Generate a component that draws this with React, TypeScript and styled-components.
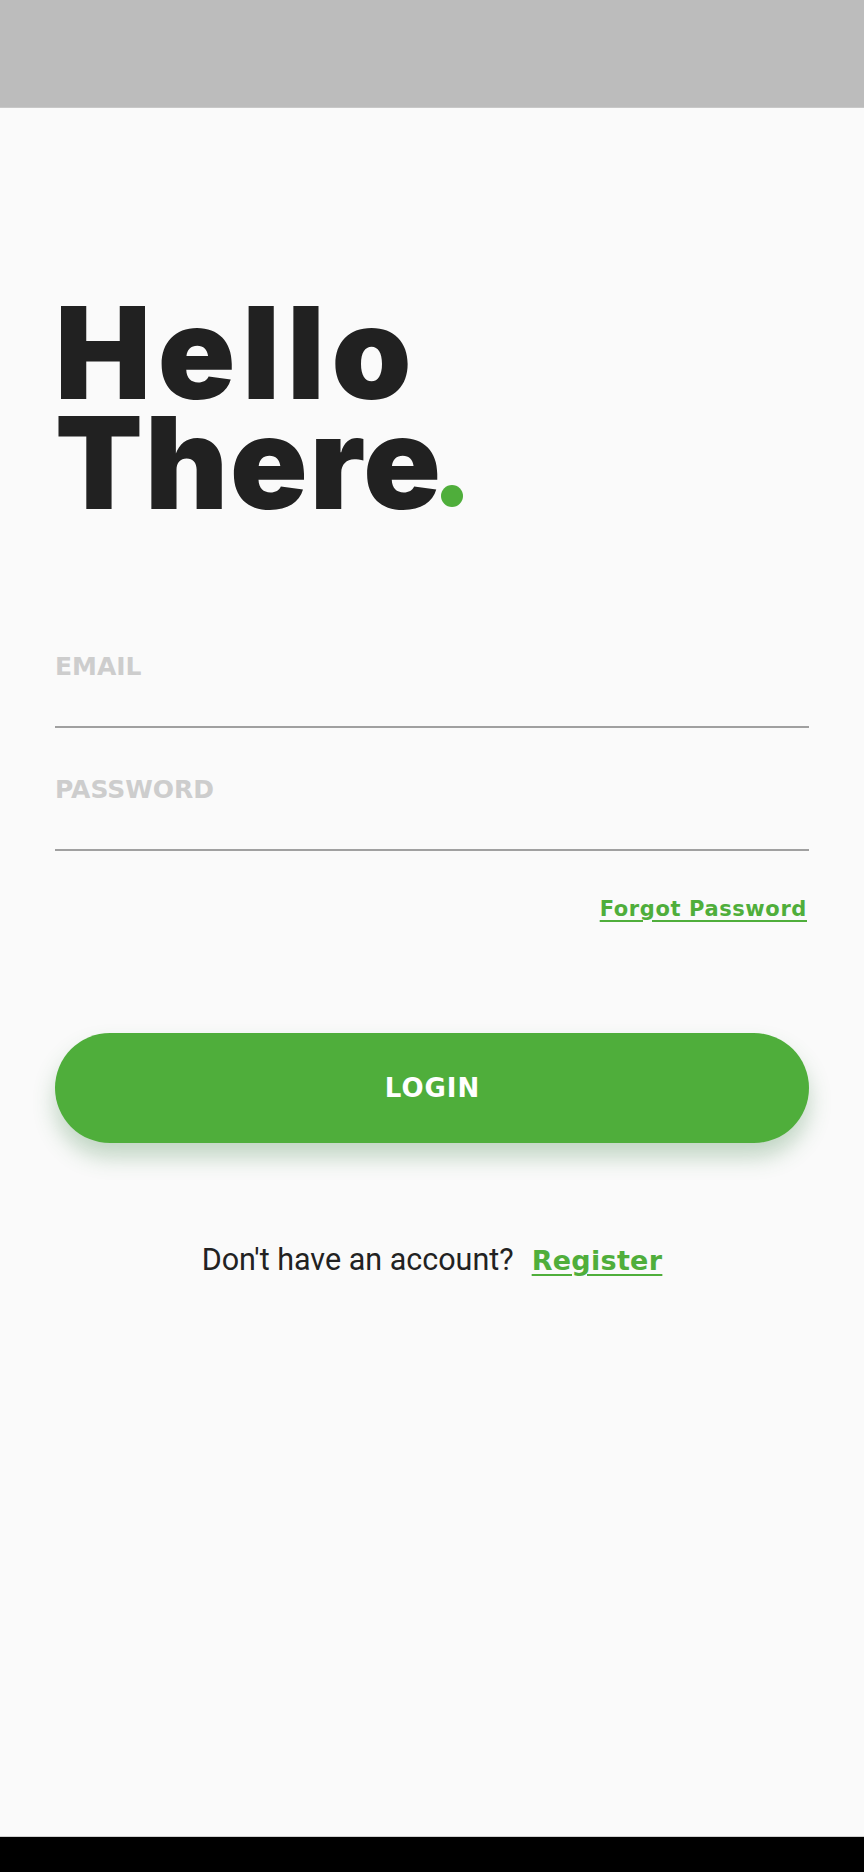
import React from "react";
import styled, { createGlobalStyle } from "styled-components";

const GREEN = "#4fae3b";
const HEAVY = "Inter, 'Open Sans', sans-serif";
const WIDE = "'DejaVu Sans', Verdana, sans-serif";

const Global = createGlobalStyle`
  html, body { margin: 0; padding: 0; background: #fafafa; }
  * { box-sizing: border-box; }
`;

const Screen = styled.div`
  width: 864px;
  height: 1872px;
  display: flex;
  flex-direction: column;
  background: #fafafa;
  overflow: hidden;
`;

const StatusBar = styled.div`
  height: 108px;
  flex: none;
  background: #bcbcbc;
  border-bottom: 1px solid #c8c8c8;
`;

const Content = styled.main`
  flex: 1;
  display: flex;
  flex-direction: column;
  padding: 190px 55px 0;
`;

const Title = styled.h1`
  margin: 0;
  display: flex;
  flex-direction: column;
  font-family: ${HEAVY};
  font-weight: 900;
  font-size: 128px;
  line-height: 110px;
  color: #212121;
`;

const TitleLine = styled.span<{ $spacing: number }>`
  display: block;
  height: 110px;
  letter-spacing: ${(p) => p.$spacing}px;
`;

const Dot = styled.span`
  display: inline-block;
  width: 22px;
  height: 22px;
  border-radius: 50%;
  background: ${GREEN};
  margin: 0 0 2px -2px;
`;

const Form = styled.form`
  display: flex;
  flex-direction: column;
  margin-top: 136px;
`;

const Field = styled.label`
  display: flex;
  flex-direction: column;
  height: 74px;
  border-bottom: 2px solid #a0a0a0;
  & + & { margin-top: 49px; }
`;

const FieldLabel = styled.span`
  font-family: ${WIDE};
  font-weight: 700;
  font-size: 25px;
  line-height: 25px;
  color: #cdcdcd;
`;

const Forgot = styled.a`
  align-self: flex-end;
  margin-top: 46px;
  margin-right: 2px;
  font-family: ${WIDE};
  font-weight: 700;
  font-size: 21px;
  line-height: 24px;
  letter-spacing: 0.6px;
  color: ${GREEN};
  text-decoration: underline;
  text-underline-offset: 4px;
  text-decoration-thickness: 2px;
`;

const LoginButton = styled.button`
  margin-top: 112px;
  height: 110px;
  border: none;
  border-radius: 55px;
  background: ${GREEN};
  color: #fff;
  font-family: ${WIDE};
  font-weight: 700;
  font-size: 26px;
  letter-spacing: 1px;
  padding: 0 0 0 1px;
  box-shadow: 0 14px 22px rgba(60, 130, 70, 0.3);
`;

const Footer = styled.div`
  margin-top: 99px;
  display: flex;
  justify-content: center;
  align-items: baseline;
  gap: 18px;
`;

const FooterText = styled.span`
  font-family: Roboto, sans-serif;
  font-size: 30.5px;
  line-height: 36px;
  color: #222;
`;

const Register = styled.a`
  font-family: ${WIDE};
  font-weight: 700;
  font-size: 27px;
  line-height: 36px;
  letter-spacing: 0.3px;
  color: ${GREEN};
  text-decoration: underline;
  text-underline-offset: 4px;
  text-decoration-thickness: 2px;
`;

const NavBar = styled.div`
  height: 36px;
  flex: none;
  background: #000;
  border-top: 1px solid #d0d0d0;
`;

export default function App() {
  return (
    <Screen>
      <Global />
      <StatusBar />
      <Content>
        <Title>
          <TitleLine $spacing={6.8}>Hello</TitleLine>
          <TitleLine $spacing={2}>
            There<Dot />
          </TitleLine>
        </Title>
        <Form onSubmit={(e) => e.preventDefault()}>
          <Field>
            <FieldLabel>EMAIL</FieldLabel>
          </Field>
          <Field>
            <FieldLabel>PASSWORD</FieldLabel>
          </Field>
          <Forgot>Forgot Password</Forgot>
          <LoginButton type="submit">LOGIN</LoginButton>
        </Form>
        <Footer>
          <FooterText>Don't have an account?</FooterText>
          <Register>Register</Register>
        </Footer>
      </Content>
      <NavBar />
    </Screen>
  );
}
